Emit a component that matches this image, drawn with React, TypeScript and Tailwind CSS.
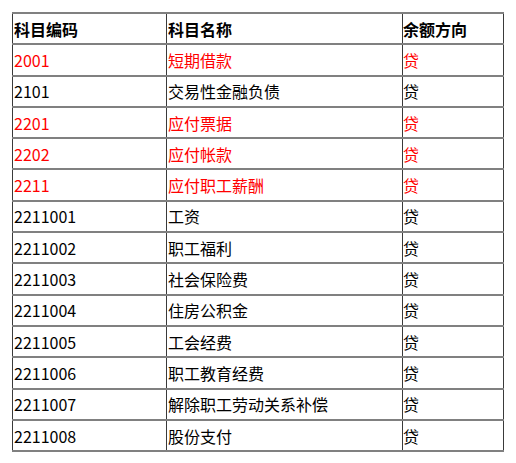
import React from "react";

type Row = { code: string; name: string; dir: string; red?: boolean };

const rows: Row[] = [
  { code: "2001", name: "短期借款", dir: "贷", red: true },
  { code: "2101", name: "交易性金融负债", dir: "贷" },
  { code: "2201", name: "应付票据", dir: "贷", red: true },
  { code: "2202", name: "应付帐款", dir: "贷", red: true },
  { code: "2211", name: "应付职工薪酬", dir: "贷", red: true },
  { code: "2211001", name: "工资", dir: "贷" },
  { code: "2211002", name: "职工福利", dir: "贷" },
  { code: "2211003", name: "社会保险费", dir: "贷" },
  { code: "2211004", name: "住房公积金", dir: "贷" },
  { code: "2211005", name: "工会经费", dir: "贷" },
  { code: "2211006", name: "职工教育经费", dir: "贷" },
  { code: "2211007", name: "解除职工劳动关系补偿", dir: "贷" },
  { code: "2211008", name: "股份支付", dir: "贷" },
];

function Cells({ a, b, c, cls }: { a: string; b: string; c: string; cls: string }) {
  return (
    <div className={`flex h-[31.3px] border-b-2 border-[#808080] ${cls}`}>
      <div className="w-[154px] flex items-center border-l border-[#3a3a3a] pl-[1px]">{a}</div>
      <div className="w-[236px] flex items-center border-l border-[#3a3a3a] pl-[1px]">{b}</div>
      <div className="w-[102px] flex items-center border-l border-r border-[#3a3a3a]">{c}</div>
    </div>
  );
}

export default function App() {
  return (
    <div className="w-[516px] h-[463px] bg-white pt-[12px] pl-[12px]" style={{ fontFamily: '"Noto Sans CJK SC", "Noto Sans", sans-serif' }}>
      <div className="w-[492px] border-t-2 border-[#808080] text-[16px] leading-none">
        <Cells a="科目编码" b="科目名称" c="余额方向" cls="font-bold text-black" />
        {rows.map((r) => (
          <Cells key={r.code} a={r.code} b={r.name} c={r.dir} cls={r.red ? "text-[#ff0000]" : "text-black"} />
        ))}
      </div>
    </div>
  );
}
